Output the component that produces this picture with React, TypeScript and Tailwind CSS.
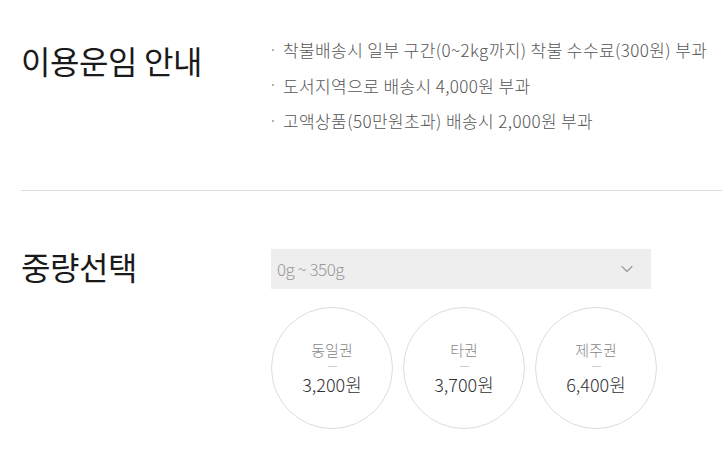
import { ChevronDown } from 'lucide-react'

const notes = [
  '착불배송시 일부 구간(0~2kg까지) 착불 수수료(300원) 부과',
  '도서지역으로 배송시 4,000원 부과',
  '고액상품(50만원초과) 배송시 2,000원 부과',
]

const zones = [
  { name: '동일권', price: '3,200원' },
  { name: '타권', price: '3,700원' },
  { name: '제주권', price: '6,400원' },
]

const font = { fontFamily: '"Noto Sans CJK KR", "Noto Sans", sans-serif' }

export default function App() {
  return (
    <div className="h-[454px] w-[722px] overflow-hidden bg-white pl-[21px]" style={font}>
      {/* 이용운임 안내 */}
      <div className="flex border-b border-[#dddddd] pb-[51px] pt-[32px]">
        <h2 className="mt-[6px] w-[250px] shrink-0 text-[32px] font-normal leading-[44px] tracking-[-0.4px] text-[#1a1a1a]">
          이용운임 안내
        </h2>
        <ul className="flex flex-col">
          {notes.map((n) => (
            <li key={n} className="flex items-center text-[17px] font-light leading-[35.5px] tracking-[0.4px] text-[#555555]">
              <span className="ml-[1px] mr-[9px] h-[2px] w-[2px] rounded-full bg-[#999999]" />
              {n}
            </li>
          ))}
        </ul>
      </div>

      {/* 중량선택 */}
      <div className="flex pt-[53px]">
        <h2 className="w-[250px] shrink-0 text-[32px] font-normal leading-[44px] tracking-[-0.4px] text-[#1a1a1a]">
          중량선택
        </h2>
        <div className="mt-[5px] flex flex-col">
          <div className="flex h-[40px] w-[380px] items-center justify-between bg-[#eeeeee] pl-[6px] pr-[14px]">
            <span className="text-[17px] font-light tracking-[-0.5px] text-[#999999]">0g ~ 350g</span>
            <ChevronDown size={20} strokeWidth={1.3} className="text-[#999999]" />
          </div>
          <div className="mt-[18px] flex gap-[10px]">
            {zones.map((z) => (
              <div
                key={z.name}
                className="flex h-[122px] w-[122px] flex-col items-center justify-center rounded-full border border-[#dddddd]"
              >
                <span className="text-[15px] font-light leading-[20px] text-[#888888]">{z.name}</span>
                <span className="my-[6px] h-px w-[9px] bg-[#cccccc]" />
                <span className="text-[18px] font-light leading-[22px] text-[#333333]">{z.price}</span>
              </div>
            ))}
          </div>
        </div>
      </div>
    </div>
  )
}
